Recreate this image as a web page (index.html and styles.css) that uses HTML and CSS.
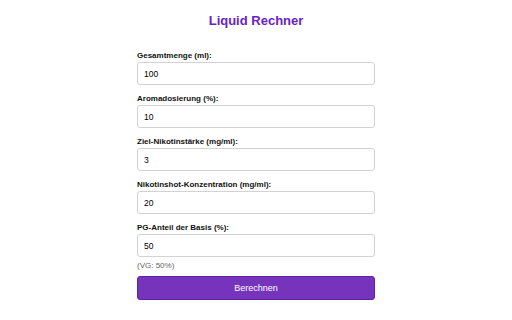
FILE: index.html
```html
<!DOCTYPE html>
<html lang="de">
<head>
<meta charset="utf-8">
<title>Liquid Rechner</title>
<link rel="stylesheet" href="styles.css">
</head>
<body>
<main class="calc">
  <h1 class="title">Liquid Rechner</h1>
  <div class="field">
    <label class="label" for="total">Gesamtmenge (ml):</label>
    <input class="input" id="total" type="text" value="100">
  </div>
  <div class="field">
    <label class="label" for="aroma">Aromadosierung (%):</label>
    <input class="input" id="aroma" type="text" value="10">
  </div>
  <div class="field">
    <label class="label" for="nic">Ziel-Nikotinstärke (mg/ml):</label>
    <input class="input" id="nic" type="text" value="3">
  </div>
  <div class="field">
    <label class="label" for="shot">Nikotinshot-Konzentration (mg/ml):</label>
    <input class="input" id="shot" type="text" value="20">
  </div>
  <div class="field field-last">
    <label class="label" for="pg">PG-Anteil der Basis (%):</label>
    <input class="input" id="pg" type="text" value="50">
    <div class="hint">(VG: 50%)</div>
  </div>
  <button class="btn" type="button">Berechnen</button>
</main>
</body>
</html>
```
FILE: styles.css
```css
html, body {
  margin: 0;
  padding: 0;
  background: #ffffff;
}
body {
  font-family: "Liberation Sans", Arial, sans-serif;
  color: #222;
}
.calc {
  width: 238px;
  margin: 0 auto;
  padding-top: 13px;
  display: flex;
  flex-direction: column;
}
.title {
  margin: 0 0 21px;
  font-size: 13px;
  line-height: 16px;
  font-weight: bold;
  text-align: center;
  color: #6a22c4;
}
.field {
  display: flex;
  flex-direction: column;
  gap: 1px;
  margin-bottom: 8px;
}
.field-last {
  margin-bottom: 5px;
}
.label {
  font-size: 8px;
  line-height: 11px;
  font-weight: bold;
  color: #111;
}
.input {
  box-sizing: border-box;
  width: 100%;
  height: 23px;
  margin: 0;
  padding: 0 6px;
  border: 1px solid #d2d2d2;
  border-radius: 3px;
  font-family: "Liberation Sans", Arial, sans-serif;
  font-size: 8.5px;
  color: #000;
  background: #fff;
}
.hint {
  margin-top: 2px;
  font-size: 8px;
  line-height: 11px;
  color: #666;
}
.btn {
  box-sizing: border-box;
  width: 100%;
  height: 24px;
  border: 1px solid #5e20a8;
  border-radius: 3px;
  background: #7634bd;
  color: #fff;
  font-family: "Liberation Sans", Arial, sans-serif;
  font-size: 9px;
  padding: 0;
}
```
